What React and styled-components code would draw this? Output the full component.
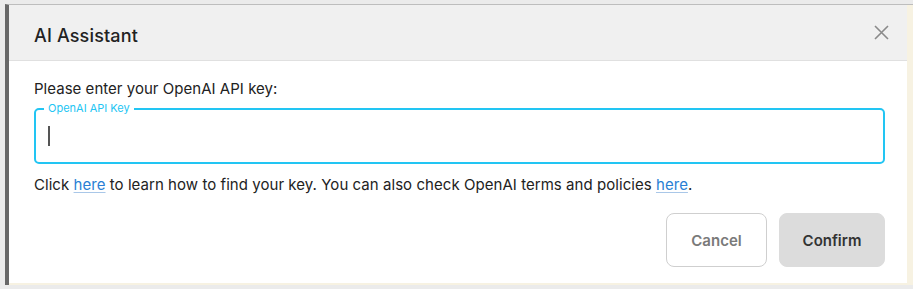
import React from "react";
import styled, { createGlobalStyle } from "styled-components";

const Global = createGlobalStyle`
  html, body { margin: 0; padding: 0; }
  body {
    background: #ebebeb;
    font-family: Inter, "Noto Sans", "Liberation Sans", sans-serif;
    width: 913px;
    height: 289px;
    overflow: hidden;
  }
`;

const Stage = styled.div`
  margin: 4px 0 0 5px;
  height: 278px;
  border-top: 1px solid #bdbdbd;
  border-left: 4px solid #686868;
  background: #f7f2e2;
  padding: 0 6px 2px 0;
  display: flex;
`;

const Dialog = styled.div`
  flex: 1;
  background: #ffffff;
  display: flex;
  flex-direction: column;
`;

const Header = styled.div`
  height: 56px;
  background: #f0f0f0;
  border-bottom: 1px solid #e0e0e0;
  display: flex;
  align-items: center;
  justify-content: space-between;
  padding: 0 18px 0 25px;
`;

const Title = styled.h2`
  margin: 5px 0 0;
  font-size: 18px;
  font-weight: 500;
  color: #222;
  letter-spacing: 0.15px;
`;

const CloseButton = styled.button`
  border: none;
  background: none;
  padding: 0;
  width: 16px;
  height: 16px;
  display: flex;
  align-items: center;
  justify-content: center;
  cursor: pointer;
`;

const Body = styled.div`
  padding: 18px 22px 16px 25px;
  display: flex;
  flex-direction: column;
`;

const Prompt = styled.p`
  margin: 0;
  font-size: 15px;
  line-height: 20px;
  color: #222;
  letter-spacing: 0.03px;
`;

const Field = styled.div`
  position: relative;
  margin-top: 9px;
  height: 52px;
  border: 2px solid #22c5f3;
  border-radius: 5px;
  display: flex;
  align-items: center;
  padding: 0 12px;
`;

const FieldLabel = styled.span`
  position: absolute;
  top: -8px;
  left: 8px;
  padding: 0 4px;
  background: #fff;
  font-size: 11px;
  line-height: 13px;
  color: #22c5f3;
`;

const Caret = styled.span`
  display: block;
  width: 1.5px;
  height: 20px;
  background: #555;
`;

const Help = styled.p`
  margin: 11px 0 0;
  font-size: 15px;
  line-height: 20px;
  color: #222;
  letter-spacing: 0.05px;
`;

const Link = styled.a`
  color: #2a7fd4;
  text-decoration: underline;
  text-decoration-color: #a9c7e8;
  text-underline-offset: 2px;
`;

const Actions = styled.div`
  margin-top: 18px;
  display: flex;
  justify-content: flex-end;
  gap: 12px;
`;

const Button = styled.button`
  height: 54px;
  width: ${(p) => p.$width}px;
  padding: 0;
  border-radius: 8px;
  font-family: inherit;
  font-size: 15px;
  font-weight: 600;
  border: 1px solid ${(p) => (p.$primary ? "#dcdcdc" : "#cfcfcf")};
  background: ${(p) => (p.$primary ? "#dcdcdc" : "#ffffff")};
  color: ${(p) => (p.$primary ? "#333" : "#7a7a7a")};
  cursor: pointer;
`;

export default function App() {
  return (
    <>
      <Global />
      <Stage>
        <Dialog>
          <Header>
            <Title>AI Assistant</Title>
            <CloseButton aria-label="Close">
              <svg width="15" height="15" viewBox="0 0 15 15">
                <path d="M1 1 L14 14 M14 1 L1 14" stroke="#8a8a8a" strokeWidth="1.6" fill="none" />
              </svg>
            </CloseButton>
          </Header>
          <Body>
            <Prompt>Please enter your OpenAI API key:</Prompt>
            <Field>
              <FieldLabel>OpenAI API Key</FieldLabel>
              <Caret />
            </Field>
            <Help>
              Click <Link href="#">here</Link> to learn how to find your key. You can also check OpenAI terms and policies <Link href="#">here</Link>.
            </Help>
            <Actions>
              <Button $width={101}>Cancel</Button>
              <Button $primary $width={106}>Confirm</Button>
            </Actions>
          </Body>
        </Dialog>
      </Stage>
    </>
  );
}
